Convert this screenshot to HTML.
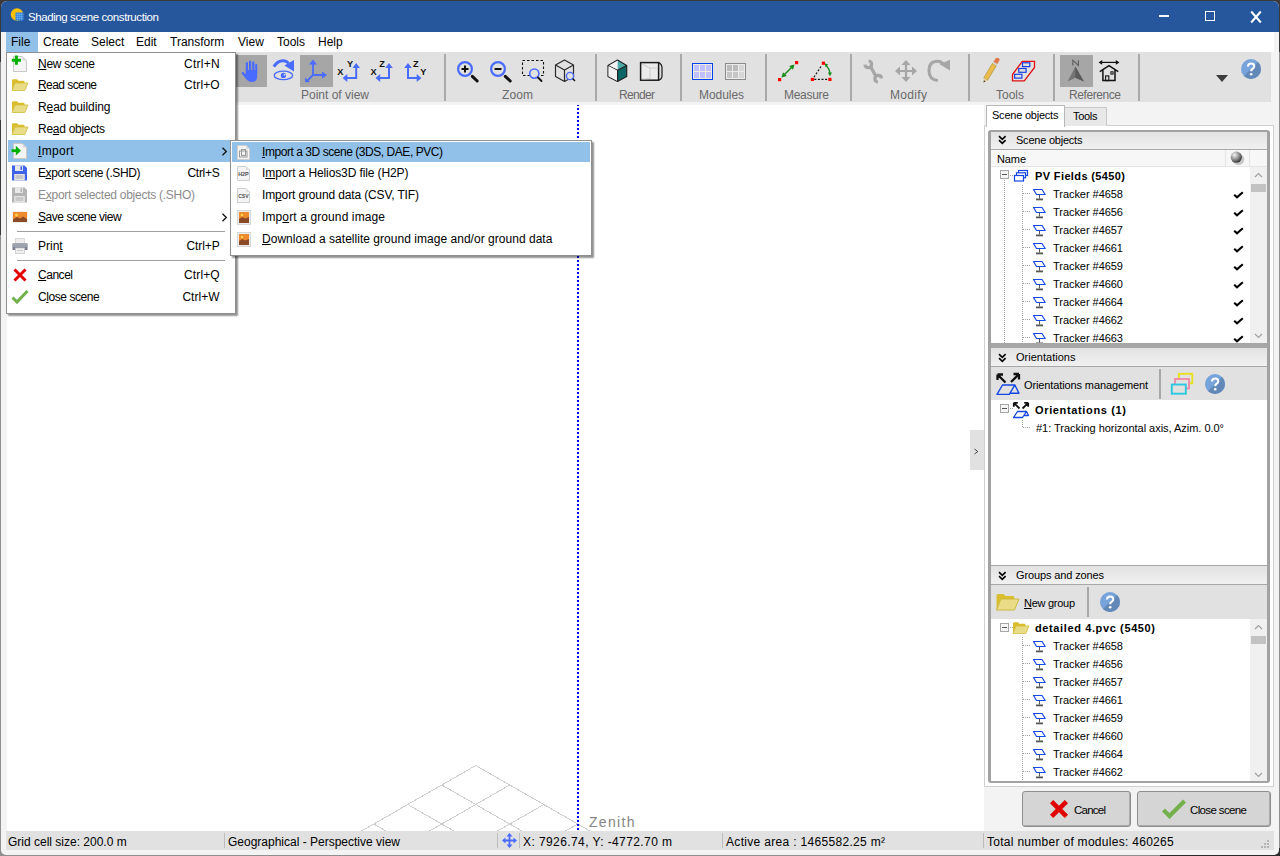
<!DOCTYPE html>
<html><head><meta charset="utf-8"><style>
html,body{margin:0;padding:0;width:1280px;height:856px;overflow:hidden;background:#3a3a3a;}
body{position:relative;font-family:'Liberation Sans', sans-serif;}
body>div,body>svg{position:absolute;box-sizing:border-box;}
.t{white-space:pre;line-height:1;}
u{text-decoration:underline;text-underline-offset:1px;}
</style></head><body>
<div style="left:0px;top:0px;width:1280px;height:856px;background:#8F8F8F;"></div>
<div style="left:0px;top:0px;width:1280px;height:8px;background:#3A3A3A;"></div>
<div style="left:0px;top:0px;width:8px;height:62px;background:#3A3A3A;"></div>
<div style="left:1272px;top:0px;width:8px;height:52px;background:#3A3A3A;"></div>
<div style="left:1160px;top:848px;width:120px;height:8px;background:#2A2A2A;"></div>
<div style="left:0px;top:120px;width:8px;height:115px;background:#3A3A3A;"></div>
<div style="left:1px;top:1px;width:1278px;height:854px;background:#F3F3F3;border-radius:6px 6px 5px 5px;"></div>
<div style="left:1px;top:1px;width:1278px;height:31px;background:#26569C;border-radius:6px 6px 0 0;"></div>
<div class="t" style="left:28px;top:12px;font-size:11.5px;color:#FFFFFF;letter-spacing:-0.412px;">Shading scene construction</div>
<svg style="left:10px;top:7px;" width="15" height="15" viewBox="0 0 15 15"><circle cx="7" cy="7.5" r="6.2" fill="#FFC000"/><path d="M7 7.5 L13.2 7.5 A6.2 6.2 0 0 1 7 13.7Z" fill="#F7A000"/><rect x="5.5" y="5.5" width="8" height="8" fill="#2F7FD8"/><path d="M7.5 5.5v8M9.5 5.5v8M11.5 5.5v8M5.5 7.5h8M5.5 9.5h8M5.5 11.5h8" stroke="#6FB0F0" stroke-width="0.6"/></svg>
<div style="left:1159px;top:15px;width:10px;height:2px;background:#fff;opacity:0.95;"></div>
<div style="left:1205px;top:11px;width:10px;height:10px;border:1px solid #fff;"></div>
<svg style="left:1249px;top:10px;" width="14" height="14" viewBox="0 0 14 14"><path d="M2.2 1.5L11.8 12.5M11.8 1.5L2.2 12.5" stroke="#fff" stroke-width="2"/></svg>
<div style="left:6px;top:32px;width:1268px;height:20px;background:#FFFFFF;"></div>
<div style="left:1px;top:32px;width:5px;height:20px;background:#F3F3F3;"></div>
<div style="left:6px;top:32px;width:32px;height:20px;background:#91C1E8;"></div>
<div class="t" style="left:11px;top:36px;font-size:12px;color:#000;">File</div>
<div class="t" style="left:43px;top:36px;font-size:12px;color:#000;">Create</div>
<div class="t" style="left:91px;top:36px;font-size:12px;color:#000;">Select</div>
<div class="t" style="left:136px;top:36px;font-size:12px;color:#000;">Edit</div>
<div class="t" style="left:170px;top:36px;font-size:12px;color:#000;">Transform</div>
<div class="t" style="left:238px;top:36px;font-size:12px;color:#000;">View</div>
<div class="t" style="left:277px;top:36px;font-size:12px;color:#000;">Tools</div>
<div class="t" style="left:318px;top:36px;font-size:12px;color:#000;">Help</div>
<div style="left:6px;top:52px;width:1265px;height:50px;background:#E1E1E1;"></div>
<div style="left:7px;top:105px;width:977px;height:726px;background:#FFFFFF;"></div>
<div style="left:444px;top:54px;width:2px;height:47px;background:#A9A9A9;"></div>
<div style="left:595px;top:54px;width:2px;height:47px;background:#A9A9A9;"></div>
<div style="left:680px;top:54px;width:2px;height:47px;background:#A9A9A9;"></div>
<div style="left:765px;top:54px;width:2px;height:47px;background:#A9A9A9;"></div>
<div style="left:850px;top:54px;width:2px;height:47px;background:#A9A9A9;"></div>
<div style="left:968px;top:54px;width:2px;height:47px;background:#A9A9A9;"></div>
<div style="left:1053px;top:54px;width:2px;height:47px;background:#A9A9A9;"></div>
<div style="left:1138px;top:54px;width:2px;height:47px;background:#A9A9A9;"></div>
<div class="t" style="left:301px;top:89px;font-size:12px;color:#6A6A6A;letter-spacing:-0.004px;">Point of view</div>
<div class="t" style="left:502px;top:89px;font-size:12px;color:#6A6A6A;letter-spacing:0.104px;">Zoom</div>
<div class="t" style="left:619px;top:89px;font-size:12px;color:#6A6A6A;letter-spacing:-0.672px;">Render</div>
<div class="t" style="left:699px;top:89px;font-size:12px;color:#6A6A6A;letter-spacing:-0.060px;">Modules</div>
<div class="t" style="left:784px;top:89px;font-size:12px;color:#6A6A6A;letter-spacing:-0.281px;">Measure</div>
<div class="t" style="left:890px;top:89px;font-size:12px;color:#6A6A6A;letter-spacing:0.331px;">Modify</div>
<div class="t" style="left:996px;top:89px;font-size:12px;color:#6A6A6A;letter-spacing:-0.004px;">Tools</div>
<div class="t" style="left:1069px;top:89px;font-size:12px;color:#6A6A6A;letter-spacing:-0.422px;">Reference</div>
<div style="left:236px;top:55px;width:31px;height:32px;background:#A6A6A6;"></div>
<svg style="left:240px;top:58px;" width="20" height="26" viewBox="0 0 20 26"><rect x="5.8" y="4" width="2.2" height="12" rx="1.1" fill="#4A6BFF"/><rect x="9" y="2.6" width="2.2" height="12" rx="1.1" fill="#4A6BFF"/><rect x="12.2" y="3.3" width="2.2" height="12" rx="1.1" fill="#4A6BFF"/><rect x="15.2" y="5.8" width="2" height="10" rx="1" fill="#4A6BFF"/><path d="M5.8 12 H17.2 V18.5 Q17.2 24 11.5 24 Q8.2 24 6.6 21.6 L1.8 15.6 Q1.3 14.4 2.5 14 Q3.5 13.8 4.3 14.8 L5.8 16.5Z" fill="#4A6BFF"/></svg>
<svg style="left:272px;top:58px;" width="24" height="24" viewBox="0 0 24 24"><path d="M1.8 8.6 Q6 2.5 11.5 2.8 Q14.5 3 16.5 5.2" stroke="#4A6BFF" stroke-width="3" fill="none"/><path d="M12.4 7.4 L22 2.1 L22 13.4 Z" fill="#4A6BFF"/><ellipse cx="11.4" cy="17.4" rx="9.2" ry="4.3" stroke="#4A6BFF" stroke-width="1.3" fill="none"/><circle cx="11.4" cy="17.4" r="2.6" fill="#4A6BFF"/><circle cx="12.6" cy="16.7" r="0.9" fill="#E1E1E1"/></svg>
<div style="left:300px;top:55px;width:33px;height:32px;background:#A6A6A6;"></div>
<svg style="left:304px;top:58px;" width="26" height="27" viewBox="0 0 26 27"><path d="M9 6 V17 H19 M9 17 L3 23" stroke="#4A6BFF" stroke-width="1.8" fill="none"/><path d="M5 6.5 L9 1.5 L13 6.5Z M18 13.5 L23 17 L18 20.5Z M1 19.5 L1.2 24.2 L6 24 Z" fill="#4A6BFF"/></svg>
<svg style="left:336px;top:58px;" width="24" height="26" viewBox="0 0 24 26"><path d="M20.2 8 V20 H9" stroke="#4A6BFF" stroke-width="2" fill="none"/><path d="M16.5 10 L20.2 5 L24 10Z M11.3 16 L6.6 20 L11.3 24Z" fill="#4A6BFF"/><text x="1.3" y="16.6" font-family="Liberation Sans" font-weight="bold" font-size="9.2" fill="#111">X</text><text x="11" y="8.9" font-family="Liberation Sans" font-weight="bold" font-size="9.2" fill="#111">Y</text></svg>
<svg style="left:369px;top:58px;" width="24" height="26" viewBox="0 0 24 26"><path d="M20 8 V20 H9" stroke="#4A6BFF" stroke-width="2" fill="none"/><path d="M16.3 10 L20 5 L23.8 10Z M11.2 16 L6.5 20 L11.2 24Z" fill="#4A6BFF"/><text x="1.5" y="16.6" font-family="Liberation Sans" font-weight="bold" font-size="9.2" fill="#111">X</text><text x="10.2" y="8.9" font-family="Liberation Sans" font-weight="bold" font-size="9.2" fill="#111">Z</text></svg>
<svg style="left:403px;top:58px;" width="26" height="26" viewBox="0 0 26 26"><path d="M5 8 V20 H14" stroke="#4A6BFF" stroke-width="2" fill="none"/><path d="M1.2 10 L5 5 L8.8 10Z M13.7 16 L18.4 20 L13.7 24Z" fill="#4A6BFF"/><text x="10" y="8.9" font-family="Liberation Sans" font-weight="bold" font-size="9.2" fill="#111">Z</text><text x="17.2" y="17.4" font-family="Liberation Sans" font-weight="bold" font-size="9.2" fill="#111">Y</text></svg>
<svg style="left:455px;top:58px;" width="26" height="26" viewBox="0 0 26 26"><circle cx="10" cy="11" r="6.9" stroke="#4A6BFF" stroke-width="2.2" fill="none"/><path d="M6.5 11 H13.5 M10 7.5 V14.5" stroke="#111" stroke-width="2"/><path d="M17.3 18.3 L22.2 23" stroke="#111" stroke-width="3" stroke-linecap="round"/></svg>
<svg style="left:488px;top:58px;" width="26" height="26" viewBox="0 0 26 26"><circle cx="10" cy="11" r="6.9" stroke="#4A6BFF" stroke-width="2.2" fill="none"/><path d="M6.5 11 H13.5" stroke="#111" stroke-width="2"/><path d="M17.3 18.3 L22.2 23" stroke="#111" stroke-width="3" stroke-linecap="round"/></svg>
<svg style="left:520px;top:58px;" width="28" height="26" viewBox="0 0 28 26"><rect x="2.5" y="2.5" width="21" height="15" stroke="#111" stroke-width="1.1" stroke-dasharray="2.5 2" fill="none"/><circle cx="14.3" cy="15.6" r="4.6" stroke="#4A6BFF" stroke-width="1.6" fill="#E1E1E1"/><path d="M18 19.5 L21.5 23" stroke="#111" stroke-width="1.8" stroke-linecap="round"/></svg>
<svg style="left:554px;top:58px;" width="24" height="26" viewBox="0 0 24 26"><path d="M1.5 7 L10.5 2 L19.5 7 V18.5 L10.5 23.5 L1.5 18.5Z M1.5 7 L10.5 12 L19.5 7 M10.5 12 V23.5" stroke="#2a2a2a" stroke-width="1.2" fill="none" stroke-linejoin="round"/><circle cx="16" cy="18" r="3.6" stroke="#4A6BFF" stroke-width="1.4" fill="#E1E1E1"/><path d="M18.6 20.6 L21 23" stroke="#111" stroke-width="1.4"/></svg>
<svg style="left:606px;top:58px;" width="24" height="26" viewBox="0 0 24 26"><path d="M11.5 12.3 L20.7 7.5 V18.5 L11.5 23.5Z" fill="#0B6766"/><path d="M11.5 2 L20.7 7.5 L11.5 12.3Z" fill="#4FAAAA"/><path d="M2 7.5 L11.5 2 L20.7 7.5 V18.5 L11.5 23.5 L2 18.5Z M2 7.5 L11.5 12.3 L20.7 7.5 M11.5 12.3 V23.5" stroke="#222" stroke-width="1.2" fill="none" stroke-linejoin="round"/><path d="M2.6 8 L11 12.6 V22.8 L2.6 18.2Z" fill="#F2F2F2"/><path d="M11.5 2.7 V11.5 L3.3 7.5Z" fill="#F2F2F2"/></svg>
<svg style="left:638px;top:58px;" width="26" height="26" viewBox="0 0 26 26"><rect x="2.6" y="4.6" width="18" height="17.6" fill="#EBEBEB" stroke="#1a1a1a" stroke-width="1.5"/><path d="M20.6 4.6 Q24 6 24 10 V18 Q24 21 20.6 22.2" stroke="#1a1a1a" stroke-width="1.2" fill="none"/><path d="M4 6 L12 10 V21 M12 10 H20 M4 21 L12 20.5" stroke="#C9C9C9" stroke-width="0.9" fill="none"/></svg>
<svg style="left:690px;top:60px;" width="26" height="22" viewBox="0 0 26 22"><rect x="2" y="3" width="21" height="17" fill="#0044F0"/><rect x="3" y="4" width="19" height="15" fill="#EFEAE4"/><rect x="4" y="5" width="5" height="6" fill="#C0C0FF" shape-rendering="crispEdges"/><rect x="10" y="5" width="5" height="6" fill="#C0C0FF" shape-rendering="crispEdges"/><rect x="16" y="5" width="5" height="6" fill="#C0C0FF" shape-rendering="crispEdges"/><rect x="4" y="12" width="5" height="6" fill="#C0C0FF" shape-rendering="crispEdges"/><rect x="10" y="12" width="5" height="6" fill="#C0C0FF" shape-rendering="crispEdges"/><rect x="16" y="12" width="5" height="6" fill="#C0C0FF" shape-rendering="crispEdges"/></svg>
<svg style="left:723px;top:60px;" width="26" height="22" viewBox="0 0 26 22"><rect x="2" y="3" width="21" height="17" fill="#8A8A8A"/><rect x="3" y="4" width="19" height="15" fill="#EBEBEB"/><rect x="4" y="5" width="5" height="6" fill="#BBBBBB" shape-rendering="crispEdges"/><rect x="10" y="5" width="5" height="6" fill="#BBBBBB" shape-rendering="crispEdges"/><rect x="16" y="5" width="5" height="6" fill="#D6D6D6" shape-rendering="crispEdges"/><rect x="4" y="12" width="5" height="6" fill="#C6C6C6" shape-rendering="crispEdges"/><rect x="10" y="12" width="5" height="6" fill="#C6C6C6" shape-rendering="crispEdges"/><rect x="16" y="12" width="5" height="6" fill="#D6D6D6" shape-rendering="crispEdges"/></svg>
<svg style="left:776px;top:58px;" width="24" height="26" viewBox="0 0 24 26"><rect x="2" y="20" width="3.2" height="3.2" fill="#FF0000"/><rect x="19" y="3" width="3.2" height="3.2" fill="#FF0000"/><path d="M7.5 17.5 L16.5 8.5" stroke="#178A17" stroke-width="1.5"/><path d="M5.5 19.5 L7 14.3 L10.8 18 Z M18.5 6.5 L13.2 8 L17 11.8 Z" fill="#178A17"/></svg>
<svg style="left:809px;top:58px;" width="24" height="26" viewBox="0 0 24 26"><rect x="1.8" y="19.8" width="3.2" height="3.2" fill="#FF0000"/><rect x="12.8" y="3.6" width="3.2" height="3.2" fill="#FF0000"/><rect x="19.3" y="19.8" width="3.2" height="3.2" fill="#FF0000"/><path d="M5 19.2 L12.8 7.2 M5.3 21.4 H19.3" stroke="#111" stroke-width="1.2" stroke-dasharray="2 1.6"/><path d="M16.5 7 Q20.5 10.5 21 15.5" stroke="#178A17" stroke-width="1.3" fill="none"/><path d="M15.8 5.3 L19.2 6.6 L16.6 9.2Z M18.9 14.6 L23 14.6 L21 18.2Z" fill="#178A17"/></svg>
<svg style="left:862px;top:57px;" width="22" height="28" viewBox="0 0 22 28"><path d="M6.59 4.01 A3.3 3.3 0 1 1 3.01 7.59 M15.91 24.99 A3.3 3.3 0 1 1 19.49 21.41" stroke="#A6A6A6" stroke-width="3.2" fill="none"/><path d="M8.4 9.4 L14.2 19.6" stroke="#A6A6A6" stroke-width="3.2"/></svg>
<svg style="left:893px;top:58px;" width="26" height="26" viewBox="0 0 26 26"><path d="M13 2 L17.5 7 H8.5Z M13 24 L17.5 19 H8.5Z M2 13 L7 8.5 V17.5Z M24 13 L19 8.5 V17.5Z" fill="#A6A6A6"/><path d="M13 6 V20 M6 13 H20" stroke="#A6A6A6" stroke-width="2.2"/></svg>
<svg style="left:926px;top:58px;" width="26" height="26" viewBox="0 0 26 26"><path d="M17.8 6.3 Q15 3.3 11.5 3.3 Q3 3.3 3 12.8 Q3 21.5 11.8 22.6" stroke="#A6A6A6" stroke-width="3" fill="none"/><path d="M13.6 6.2 L24 1.8 L24 12.5Z" fill="#A6A6A6"/></svg>
<svg style="left:981px;top:56px;" width="20" height="30" viewBox="0 0 20 30"><path d="M2.76 21.94 L11.5 7.37 L15.3 9.63 L6.56 24.2Z" fill="#E9BC4C" stroke="#B89032" stroke-width="0.7"/><path d="M11.5 7.37 L12.5 5.66 L16.3 7.92 L15.3 9.63Z" fill="#CFCFCF"/><path d="M12.5 5.66 L14.6 2.23 Q16.5 1.2 18.2 2.5 Q18.9 3.6 18.4 4.49 L16.3 7.92Z" fill="#E27A4A"/><path d="M2.6 26.5 L2.76 21.94 L6.56 24.2Z" fill="#E8D0A0"/><path d="M2.6 26.5 L2.9 24.3 L4.6 25.3Z" fill="#3A2A20"/></svg>
<svg style="left:1011px;top:58px;" width="26" height="26" viewBox="0 0 26 26"><path d="M1.5 22.8 V16.5 L11.3 3.3 H23.5 V9.5 L13.3 22.8 Z" fill="none" stroke="#E01010" stroke-width="1.3"/><rect x="11.5" y="4.8" width="7.3" height="3.8" fill="none" stroke="#1A3FE0" stroke-width="1.2"/><rect x="7.8" y="10.5" width="7.3" height="3.8" fill="none" stroke="#1A3FE0" stroke-width="1.2"/><rect x="3.6" y="16.3" width="7.3" height="3.8" fill="none" stroke="#1A3FE0" stroke-width="1.2"/></svg>
<div style="left:1060px;top:55px;width:33px;height:32px;background:#A6A6A6;"></div>
<svg style="left:1064px;top:58px;" width="26" height="26" viewBox="0 0 26 26"><path d="M8.8 7.5 V2.2 L14.4 7.5 V2.2" stroke="#5E5E5E" stroke-width="1.1" fill="none"/><path d="M11.4 8.6 L19.9 23.5 L11.4 19.8 L3.6 23.5Z" fill="#747474"/><path d="M11.4 8.6 L19.9 23.5 L11.4 19.8Z" fill="#5A5A5A"/></svg>
<svg style="left:1096px;top:58px;" width="26" height="26" viewBox="0 0 26 26"><path d="M4.5 4.4 H21.5" stroke="#111" stroke-width="1.2"/><path d="M2.6 4.4 L6.2 2 V6.8Z M23.4 4.4 L19.8 2 V6.8Z" fill="#111"/><path d="M3.8 13.6 L13 7.6 L22.2 13.6 M6.9 11.8 V22.6 H19 V11.8" stroke="#111" stroke-width="1.5" fill="none"/><rect x="9.6" y="17.9" width="3.2" height="4.7" fill="none" stroke="#111" stroke-width="1.1"/><rect x="14.9" y="13.8" width="2.2" height="2.3" fill="none" stroke="#111" stroke-width="1"/></svg>
<svg style="left:1215px;top:74px;" width="14" height="9" viewBox="0 0 14 9"><path d="M1 1 H13 L7 8Z" fill="#3C3C3C"/></svg>
<svg style="left:1241px;top:59px;" width="20" height="20" viewBox="0 0 20 20"><defs><clipPath id="hc124159"><circle cx="10.0" cy="10.0" r="10.0"/></clipPath></defs><g clip-path="url(#hc124159)"><rect width="20" height="20" fill="#77A3DB"/><path d="M20 0 L20 20 L0 20Z" fill="#6288B8"/></g><path d="M7 7.5 Q7 4.5 10.2 4.5 Q13.3 4.5 13.3 7.3 Q13.3 9 11.4 10 Q10.2 10.7 10.2 12.2" stroke="#fff" stroke-width="2.1" fill="none"/><circle cx="10.2" cy="15.2" r="1.3" fill="#fff"/></svg>
<div style="left:984px;top:125px;width:290px;height:662px;background:#FFFFFF;border:1px solid #D0D0D0;"></div>
<div style="left:1064px;top:107px;width:43px;height:19px;background:#E8E8E8;border:1px solid #C8C8C8;border-bottom:none;"></div>
<div class="t" style="left:1073px;top:111px;font-size:11px;color:#000;letter-spacing:-0.322px;">Tools</div>
<div style="left:986px;top:105px;width:79px;height:22px;background:#FFFFFF;border:1px solid #B8B8B8;border-bottom:none;"></div>
<div style="left:984px;top:125px;width:3px;height:1px;background:#D0D0D0;"></div>
<div class="t" style="left:992px;top:110px;font-size:11px;color:#000;letter-spacing:-0.226px;">Scene objects</div>
<div style="left:988px;top:130px;width:282px;height:653px;border:solid #A2A2A2;border-width:2px 3px 2px 3px;border-radius:3px;background:#FFFFFF;"></div>
<div style="left:991px;top:132px;width:276px;height:17px;background:linear-gradient(#E2E2E2,#F1F1F1);"></div>
<div style="left:991px;top:149px;width:276px;height:1px;background:#A8A8A8;"></div>
<svg style="left:998px;top:135px;" width="9" height="10" viewBox="0 0 9 10"><path d="M1 1.2 L4.3 4.3 L7.6 1.2 M1 5.2 L4.3 8.3 L7.6 5.2" stroke="#000" stroke-width="1.6" fill="none"/></svg>
<div class="t" style="left:1016px;top:135px;font-size:11px;color:#000;letter-spacing:-0.226px;">Scene objects</div>
<div style="left:991px;top:150px;width:276px;height:16px;background:#F7F7F7;"></div>
<div style="left:991px;top:166px;width:276px;height:1px;background:#E4E4E4;"></div>
<div style="left:1225px;top:150px;width:1px;height:16px;background:#E4E4E4;"></div>
<div style="left:1249px;top:150px;width:1px;height:16px;background:#E4E4E4;"></div>
<div class="t" style="left:997px;top:154px;font-size:11px;color:#000;letter-spacing:-0.115px;">Name</div>
<svg style="left:1229px;top:150px;" width="18" height="17" viewBox="0 0 18 17"><defs><radialGradient id="sph" cx="0.35" cy="0.3" r="0.7"><stop offset="0" stop-color="#F4F4F4"/><stop offset="0.6" stop-color="#8A8A8A"/><stop offset="1" stop-color="#3A3A3A"/></radialGradient></defs><circle cx="9.5" cy="9.5" r="5.8" fill="#C8C8C8"/><circle cx="7.3" cy="7.2" r="5.6" fill="url(#sph)"/></svg>
<div style="left:1250px;top:167px;width:17px;height:176px;background:#F0F0F0;"></div>
<div style="left:1251px;top:184px;width:15px;height:8px;background:#C2C2C2;"></div>
<svg style="left:1254px;top:172px;" width="9" height="6" viewBox="0 0 9 6"><path d="M1 5 L4.5 1.5 L8 5" stroke="#A0A0A0" stroke-width="1.2" fill="none"/></svg>
<svg style="left:1254px;top:333px;" width="9" height="6" viewBox="0 0 9 6"><path d="M1 1 L4.5 4.5 L8 1" stroke="#A0A0A0" stroke-width="1.2" fill="none"/></svg>
<div style="left:1000px;top:170px;width:9px;height:9px;border:1px solid #A6A6A6;background:#F6F6F6;"></div>
<div style="left:1002px;top:174px;width:5px;height:1px;background:#555;"></div>
<div style="left:1010px;top:175px;width:3px;height:1px;background:repeating-linear-gradient(to right,#A0A0A0 0 1px,transparent 1px 2px);"></div>
<div style="left:1004px;top:180px;width:1px;height:163px;background:repeating-linear-gradient(to bottom,#A0A0A0 0 1px,transparent 1px 2px);"></div>
<svg style="left:1013px;top:169px;" width="16" height="14" viewBox="0 0 16 14"><rect x="5.5" y="1.5" width="9" height="5" fill="none" stroke="#1447E6" stroke-width="1.2"/><rect x="3.5" y="3.8" width="9" height="5" fill="#fff" stroke="#1447E6" stroke-width="1.2"/><rect x="1.5" y="6.5" width="9" height="5.5" fill="#fff" stroke="#1447E6" stroke-width="1.2"/></svg>
<div class="t" style="left:1035px;top:171px;font-size:11px;color:#000;font-weight:bold;letter-spacing:0.375px;">PV Fields (5450)</div>
<div style="left:1022px;top:185px;width:1px;height:158px;background:repeating-linear-gradient(to bottom,#A0A0A0 0 1px,transparent 1px 2px);"></div>
<div style="left:1023px;top:193px;width:8px;height:1px;background:repeating-linear-gradient(to right,#A0A0A0 0 1px,transparent 1px 2px);"></div>
<svg style="left:1032px;top:188px;" width="15" height="13" viewBox="0 0 15 13"><path d="M1.5 1.5 H10 L13.2 6.5 H4.5 Z" fill="none" stroke="#1447E6" stroke-width="1.2" stroke-linejoin="round"/><path d="M7.5 7 V10.5" stroke="#555" stroke-width="1"/><rect x="4" y="10.5" width="7" height="1.8" fill="#555"/></svg>
<div class="t" style="left:1053px;top:189px;font-size:11px;color:#000;letter-spacing:-0.044px;">Tracker #4658</div>
<svg style="left:1233px;top:191px;" width="11" height="8" viewBox="0 0 11 8"><path d="M1.2 3.8 L4 6.3 L9.8 1.3" stroke="#000" stroke-width="2.1" fill="none"/></svg>
<div style="left:1023px;top:211px;width:8px;height:1px;background:repeating-linear-gradient(to right,#A0A0A0 0 1px,transparent 1px 2px);"></div>
<svg style="left:1032px;top:206px;" width="15" height="13" viewBox="0 0 15 13"><path d="M1.5 1.5 H10 L13.2 6.5 H4.5 Z" fill="none" stroke="#1447E6" stroke-width="1.2" stroke-linejoin="round"/><path d="M7.5 7 V10.5" stroke="#555" stroke-width="1"/><rect x="4" y="10.5" width="7" height="1.8" fill="#555"/></svg>
<div class="t" style="left:1053px;top:207px;font-size:11px;color:#000;letter-spacing:-0.044px;">Tracker #4656</div>
<svg style="left:1233px;top:209px;" width="11" height="8" viewBox="0 0 11 8"><path d="M1.2 3.8 L4 6.3 L9.8 1.3" stroke="#000" stroke-width="2.1" fill="none"/></svg>
<div style="left:1023px;top:229px;width:8px;height:1px;background:repeating-linear-gradient(to right,#A0A0A0 0 1px,transparent 1px 2px);"></div>
<svg style="left:1032px;top:224px;" width="15" height="13" viewBox="0 0 15 13"><path d="M1.5 1.5 H10 L13.2 6.5 H4.5 Z" fill="none" stroke="#1447E6" stroke-width="1.2" stroke-linejoin="round"/><path d="M7.5 7 V10.5" stroke="#555" stroke-width="1"/><rect x="4" y="10.5" width="7" height="1.8" fill="#555"/></svg>
<div class="t" style="left:1053px;top:225px;font-size:11px;color:#000;letter-spacing:-0.044px;">Tracker #4657</div>
<svg style="left:1233px;top:227px;" width="11" height="8" viewBox="0 0 11 8"><path d="M1.2 3.8 L4 6.3 L9.8 1.3" stroke="#000" stroke-width="2.1" fill="none"/></svg>
<div style="left:1023px;top:247px;width:8px;height:1px;background:repeating-linear-gradient(to right,#A0A0A0 0 1px,transparent 1px 2px);"></div>
<svg style="left:1032px;top:242px;" width="15" height="13" viewBox="0 0 15 13"><path d="M1.5 1.5 H10 L13.2 6.5 H4.5 Z" fill="none" stroke="#1447E6" stroke-width="1.2" stroke-linejoin="round"/><path d="M7.5 7 V10.5" stroke="#555" stroke-width="1"/><rect x="4" y="10.5" width="7" height="1.8" fill="#555"/></svg>
<div class="t" style="left:1053px;top:243px;font-size:11px;color:#000;letter-spacing:-0.044px;">Tracker #4661</div>
<svg style="left:1233px;top:245px;" width="11" height="8" viewBox="0 0 11 8"><path d="M1.2 3.8 L4 6.3 L9.8 1.3" stroke="#000" stroke-width="2.1" fill="none"/></svg>
<div style="left:1023px;top:265px;width:8px;height:1px;background:repeating-linear-gradient(to right,#A0A0A0 0 1px,transparent 1px 2px);"></div>
<svg style="left:1032px;top:260px;" width="15" height="13" viewBox="0 0 15 13"><path d="M1.5 1.5 H10 L13.2 6.5 H4.5 Z" fill="none" stroke="#1447E6" stroke-width="1.2" stroke-linejoin="round"/><path d="M7.5 7 V10.5" stroke="#555" stroke-width="1"/><rect x="4" y="10.5" width="7" height="1.8" fill="#555"/></svg>
<div class="t" style="left:1053px;top:261px;font-size:11px;color:#000;letter-spacing:-0.044px;">Tracker #4659</div>
<svg style="left:1233px;top:263px;" width="11" height="8" viewBox="0 0 11 8"><path d="M1.2 3.8 L4 6.3 L9.8 1.3" stroke="#000" stroke-width="2.1" fill="none"/></svg>
<div style="left:1023px;top:283px;width:8px;height:1px;background:repeating-linear-gradient(to right,#A0A0A0 0 1px,transparent 1px 2px);"></div>
<svg style="left:1032px;top:278px;" width="15" height="13" viewBox="0 0 15 13"><path d="M1.5 1.5 H10 L13.2 6.5 H4.5 Z" fill="none" stroke="#1447E6" stroke-width="1.2" stroke-linejoin="round"/><path d="M7.5 7 V10.5" stroke="#555" stroke-width="1"/><rect x="4" y="10.5" width="7" height="1.8" fill="#555"/></svg>
<div class="t" style="left:1053px;top:279px;font-size:11px;color:#000;letter-spacing:-0.044px;">Tracker #4660</div>
<svg style="left:1233px;top:281px;" width="11" height="8" viewBox="0 0 11 8"><path d="M1.2 3.8 L4 6.3 L9.8 1.3" stroke="#000" stroke-width="2.1" fill="none"/></svg>
<div style="left:1023px;top:301px;width:8px;height:1px;background:repeating-linear-gradient(to right,#A0A0A0 0 1px,transparent 1px 2px);"></div>
<svg style="left:1032px;top:296px;" width="15" height="13" viewBox="0 0 15 13"><path d="M1.5 1.5 H10 L13.2 6.5 H4.5 Z" fill="none" stroke="#1447E6" stroke-width="1.2" stroke-linejoin="round"/><path d="M7.5 7 V10.5" stroke="#555" stroke-width="1"/><rect x="4" y="10.5" width="7" height="1.8" fill="#555"/></svg>
<div class="t" style="left:1053px;top:297px;font-size:11px;color:#000;letter-spacing:-0.044px;">Tracker #4664</div>
<svg style="left:1233px;top:299px;" width="11" height="8" viewBox="0 0 11 8"><path d="M1.2 3.8 L4 6.3 L9.8 1.3" stroke="#000" stroke-width="2.1" fill="none"/></svg>
<div style="left:1023px;top:319px;width:8px;height:1px;background:repeating-linear-gradient(to right,#A0A0A0 0 1px,transparent 1px 2px);"></div>
<svg style="left:1032px;top:314px;" width="15" height="13" viewBox="0 0 15 13"><path d="M1.5 1.5 H10 L13.2 6.5 H4.5 Z" fill="none" stroke="#1447E6" stroke-width="1.2" stroke-linejoin="round"/><path d="M7.5 7 V10.5" stroke="#555" stroke-width="1"/><rect x="4" y="10.5" width="7" height="1.8" fill="#555"/></svg>
<div class="t" style="left:1053px;top:315px;font-size:11px;color:#000;letter-spacing:-0.044px;">Tracker #4662</div>
<svg style="left:1233px;top:317px;" width="11" height="8" viewBox="0 0 11 8"><path d="M1.2 3.8 L4 6.3 L9.8 1.3" stroke="#000" stroke-width="2.1" fill="none"/></svg>
<div style="left:1023px;top:337px;width:8px;height:1px;background:repeating-linear-gradient(to right,#A0A0A0 0 1px,transparent 1px 2px);"></div>
<svg style="left:1032px;top:332px;" width="15" height="13" viewBox="0 0 15 13"><path d="M1.5 1.5 H10 L13.2 6.5 H4.5 Z" fill="none" stroke="#1447E6" stroke-width="1.2" stroke-linejoin="round"/><path d="M7.5 7 V10.5" stroke="#555" stroke-width="1"/><rect x="4" y="10.5" width="7" height="1.8" fill="#555"/></svg>
<div class="t" style="left:1053px;top:333px;font-size:11px;color:#000;letter-spacing:-0.044px;">Tracker #4663</div>
<svg style="left:1233px;top:335px;" width="11" height="8" viewBox="0 0 11 8"><path d="M1.2 3.8 L4 6.3 L9.8 1.3" stroke="#000" stroke-width="2.1" fill="none"/></svg>
<div style="left:991px;top:343px;width:276px;height:5px;background:#A6A6A6;"></div>
<div style="left:991px;top:348px;width:276px;height:18px;background:linear-gradient(#E2E2E2,#F1F1F1);"></div>
<div style="left:991px;top:366px;width:276px;height:1px;background:#A8A8A8;"></div>
<svg style="left:998px;top:353px;" width="9" height="10" viewBox="0 0 9 10"><path d="M1 1.2 L4.3 4.3 L7.6 1.2 M1 5.2 L4.3 8.3 L7.6 5.2" stroke="#000" stroke-width="1.6" fill="none"/></svg>
<div class="t" style="left:1016px;top:352px;font-size:11px;color:#000;letter-spacing:0.017px;">Orientations</div>
<div style="left:991px;top:367px;width:276px;height:33px;background:#E1E1E1;"></div>
<svg style="left:995px;top:371px;" width="27" height="26" viewBox="0 0 27 26"><path d="M3 4 L10.5 11.5 M2.5 3.5 H8 M2.5 3.5 V9 M23.5 3.5 L16 11 M24 3 H18.5 M24 3 V8.5" stroke="#111" stroke-width="2.3" fill="none"/><path d="M2 23.4 L7.5 14 H19.8 L14.3 23.4 Z M19.8 14 L24 22.2 H14.8" stroke="#1447E6" stroke-width="1.4" fill="none" stroke-linejoin="round"/></svg>
<div class="t" style="left:1024px;top:380px;font-size:11px;color:#000;letter-spacing:-0.117px;">Orientations management</div>
<div style="left:1159px;top:369px;width:2px;height:30px;background:#A8A8A8;"></div>
<svg style="left:1169px;top:371px;" width="26" height="26" viewBox="0 0 26 26"><rect x="9.8" y="2.8" width="13.5" height="9.5" fill="#E1E1E1" stroke="#E8E020" stroke-width="1.9"/><rect x="6" y="8" width="14" height="9.5" fill="#E1E1E1" stroke="#F08CA8" stroke-width="1.9"/><rect x="2.8" y="13.5" width="14" height="9.2" fill="#E1E1E1" stroke="#2AC8E0" stroke-width="1.9"/></svg>
<svg style="left:1205px;top:374px;" width="20" height="20" viewBox="0 0 20 20"><defs><clipPath id="hc1205374"><circle cx="10.0" cy="10.0" r="10.0"/></clipPath></defs><g clip-path="url(#hc1205374)"><rect width="20" height="20" fill="#77A3DB"/><path d="M20 0 L20 20 L0 20Z" fill="#6288B8"/></g><path d="M7 7.5 Q7 4.5 10.2 4.5 Q13.3 4.5 13.3 7.3 Q13.3 9 11.4 10 Q10.2 10.7 10.2 12.2" stroke="#fff" stroke-width="2.1" fill="none"/><circle cx="10.2" cy="15.2" r="1.3" fill="#fff"/></svg>
<div style="left:1000px;top:404px;width:9px;height:9px;border:1px solid #A6A6A6;background:#F6F6F6;"></div>
<div style="left:1002px;top:408px;width:5px;height:1px;background:#555;"></div>
<div style="left:1010px;top:408px;width:3px;height:1px;background:repeating-linear-gradient(to right,#A0A0A0 0 1px,transparent 1px 2px);"></div>
<svg style="left:1012px;top:401px;" width="18" height="18" viewBox="0 0 18 18"><path d="M2.3 2.3 L7.5 7.5 M1.8 1.8 H5.8 M1.8 1.8 V5.8 M15.7 2.3 L10.5 7.5 M16.2 1.8 H12.2 M16.2 1.8 V5.8" stroke="#111" stroke-width="1.8" fill="none"/><path d="M1.5 16.5 L5.5 10.5 H14.5 L10.5 16.5 Z M14.5 10.5 L16.5 14.5 H11.5" stroke="#1447E6" stroke-width="1.3" fill="none" stroke-linejoin="round"/></svg>
<div class="t" style="left:1035px;top:405px;font-size:11px;color:#000;font-weight:bold;letter-spacing:0.647px;">Orientations (1)</div>
<div style="left:1022px;top:420px;width:1px;height:8px;background:repeating-linear-gradient(to bottom,#A0A0A0 0 1px,transparent 1px 2px);"></div>
<div style="left:1023px;top:427px;width:8px;height:1px;background:repeating-linear-gradient(to right,#A0A0A0 0 1px,transparent 1px 2px);"></div>
<div class="t" style="left:1036px;top:423px;font-size:11px;color:#000;letter-spacing:-0.027px;">#1: Tracking horizontal axis, Azim. 0.0°</div>
<div style="left:991px;top:565px;width:276px;height:1px;background:#A8A8A8;"></div>
<div style="left:991px;top:566px;width:276px;height:18px;background:linear-gradient(#E2E2E2,#F1F1F1);"></div>
<div style="left:991px;top:584px;width:276px;height:1px;background:#A8A8A8;"></div>
<svg style="left:998px;top:571px;" width="9" height="10" viewBox="0 0 9 10"><path d="M1 1.2 L4.3 4.3 L7.6 1.2 M1 5.2 L4.3 8.3 L7.6 5.2" stroke="#000" stroke-width="1.6" fill="none"/></svg>
<div class="t" style="left:1016px;top:570px;font-size:11px;color:#000;letter-spacing:-0.126px;">Groups and zones</div>
<div style="left:991px;top:585px;width:276px;height:34px;background:#E1E1E1;"></div>
<svg style="left:995px;top:592px;" width="26" height="20" viewBox="0 0 26 20"><path d="M1.5 3.5 Q1.5 2 3 2 H8.5 L10.5 4 H18 Q19.2 4 19.2 5.2 V7 H6 L1.5 18Z" fill="#D9BF2E"/><path d="M1.5 18 L6 7 H24 L19.5 18Z" fill="#E8DC86" stroke="#CDB635" stroke-width="0.9"/></svg>
<div class="t" style="left:1024px;top:598px;font-size:11px;color:#000;letter-spacing:-0.275px;"><u>N</u>ew group</div>
<div style="left:1087px;top:587px;width:2px;height:30px;background:#A8A8A8;"></div>
<svg style="left:1100px;top:592px;" width="20" height="20" viewBox="0 0 20 20"><defs><clipPath id="hc1100592"><circle cx="10.0" cy="10.0" r="10.0"/></clipPath></defs><g clip-path="url(#hc1100592)"><rect width="20" height="20" fill="#77A3DB"/><path d="M20 0 L20 20 L0 20Z" fill="#6288B8"/></g><path d="M7 7.5 Q7 4.5 10.2 4.5 Q13.3 4.5 13.3 7.3 Q13.3 9 11.4 10 Q10.2 10.7 10.2 12.2" stroke="#fff" stroke-width="2.1" fill="none"/><circle cx="10.2" cy="15.2" r="1.3" fill="#fff"/></svg>
<div style="left:1250px;top:619px;width:17px;height:162px;background:#F0F0F0;"></div>
<div style="left:1251px;top:636px;width:15px;height:8px;background:#C2C2C2;"></div>
<svg style="left:1254px;top:624px;" width="9" height="6" viewBox="0 0 9 6"><path d="M1 5 L4.5 1.5 L8 5" stroke="#A0A0A0" stroke-width="1.2" fill="none"/></svg>
<svg style="left:1254px;top:772px;" width="9" height="6" viewBox="0 0 9 6"><path d="M1 1 L4.5 4.5 L8 1" stroke="#A0A0A0" stroke-width="1.2" fill="none"/></svg>
<div style="left:1000px;top:623px;width:9px;height:9px;border:1px solid #A6A6A6;background:#F6F6F6;"></div>
<div style="left:1002px;top:627px;width:5px;height:1px;background:#555;"></div>
<div style="left:1010px;top:627px;width:3px;height:1px;background:repeating-linear-gradient(to right,#A0A0A0 0 1px,transparent 1px 2px);"></div>
<svg style="left:1012px;top:620px;" width="18" height="15" viewBox="0 0 18 15"><path d="M1 3.5 Q1 2.2 2.3 2.2 H6 L7.5 3.7 H12.5 Q13.5 3.7 13.5 4.8 V6 H4.2 L1 13.5Z" fill="#D9BF2E"/><path d="M1 13.5 L4.2 6 H17 L13.8 13.5Z" fill="#E8DC86" stroke="#D2BC36" stroke-width="0.8"/></svg>
<div class="t" style="left:1035px;top:623px;font-size:11px;color:#000;font-weight:bold;letter-spacing:0.620px;">detailed 4.pvc (5450)</div>
<div style="left:1022px;top:637px;width:1px;height:144px;background:repeating-linear-gradient(to bottom,#A0A0A0 0 1px,transparent 1px 2px);"></div>
<div style="left:1023px;top:645px;width:8px;height:1px;background:repeating-linear-gradient(to right,#A0A0A0 0 1px,transparent 1px 2px);"></div>
<svg style="left:1032px;top:640px;" width="15" height="13" viewBox="0 0 15 13"><path d="M1.5 1.5 H10 L13.2 6.5 H4.5 Z" fill="none" stroke="#1447E6" stroke-width="1.2" stroke-linejoin="round"/><path d="M7.5 7 V10.5" stroke="#555" stroke-width="1"/><rect x="4" y="10.5" width="7" height="1.8" fill="#555"/></svg>
<div class="t" style="left:1053px;top:641px;font-size:11px;color:#000;letter-spacing:-0.044px;">Tracker #4658</div>
<div style="left:1023px;top:663px;width:8px;height:1px;background:repeating-linear-gradient(to right,#A0A0A0 0 1px,transparent 1px 2px);"></div>
<svg style="left:1032px;top:658px;" width="15" height="13" viewBox="0 0 15 13"><path d="M1.5 1.5 H10 L13.2 6.5 H4.5 Z" fill="none" stroke="#1447E6" stroke-width="1.2" stroke-linejoin="round"/><path d="M7.5 7 V10.5" stroke="#555" stroke-width="1"/><rect x="4" y="10.5" width="7" height="1.8" fill="#555"/></svg>
<div class="t" style="left:1053px;top:659px;font-size:11px;color:#000;letter-spacing:-0.044px;">Tracker #4656</div>
<div style="left:1023px;top:681px;width:8px;height:1px;background:repeating-linear-gradient(to right,#A0A0A0 0 1px,transparent 1px 2px);"></div>
<svg style="left:1032px;top:676px;" width="15" height="13" viewBox="0 0 15 13"><path d="M1.5 1.5 H10 L13.2 6.5 H4.5 Z" fill="none" stroke="#1447E6" stroke-width="1.2" stroke-linejoin="round"/><path d="M7.5 7 V10.5" stroke="#555" stroke-width="1"/><rect x="4" y="10.5" width="7" height="1.8" fill="#555"/></svg>
<div class="t" style="left:1053px;top:677px;font-size:11px;color:#000;letter-spacing:-0.044px;">Tracker #4657</div>
<div style="left:1023px;top:699px;width:8px;height:1px;background:repeating-linear-gradient(to right,#A0A0A0 0 1px,transparent 1px 2px);"></div>
<svg style="left:1032px;top:694px;" width="15" height="13" viewBox="0 0 15 13"><path d="M1.5 1.5 H10 L13.2 6.5 H4.5 Z" fill="none" stroke="#1447E6" stroke-width="1.2" stroke-linejoin="round"/><path d="M7.5 7 V10.5" stroke="#555" stroke-width="1"/><rect x="4" y="10.5" width="7" height="1.8" fill="#555"/></svg>
<div class="t" style="left:1053px;top:695px;font-size:11px;color:#000;letter-spacing:-0.044px;">Tracker #4661</div>
<div style="left:1023px;top:717px;width:8px;height:1px;background:repeating-linear-gradient(to right,#A0A0A0 0 1px,transparent 1px 2px);"></div>
<svg style="left:1032px;top:712px;" width="15" height="13" viewBox="0 0 15 13"><path d="M1.5 1.5 H10 L13.2 6.5 H4.5 Z" fill="none" stroke="#1447E6" stroke-width="1.2" stroke-linejoin="round"/><path d="M7.5 7 V10.5" stroke="#555" stroke-width="1"/><rect x="4" y="10.5" width="7" height="1.8" fill="#555"/></svg>
<div class="t" style="left:1053px;top:713px;font-size:11px;color:#000;letter-spacing:-0.044px;">Tracker #4659</div>
<div style="left:1023px;top:735px;width:8px;height:1px;background:repeating-linear-gradient(to right,#A0A0A0 0 1px,transparent 1px 2px);"></div>
<svg style="left:1032px;top:730px;" width="15" height="13" viewBox="0 0 15 13"><path d="M1.5 1.5 H10 L13.2 6.5 H4.5 Z" fill="none" stroke="#1447E6" stroke-width="1.2" stroke-linejoin="round"/><path d="M7.5 7 V10.5" stroke="#555" stroke-width="1"/><rect x="4" y="10.5" width="7" height="1.8" fill="#555"/></svg>
<div class="t" style="left:1053px;top:731px;font-size:11px;color:#000;letter-spacing:-0.044px;">Tracker #4660</div>
<div style="left:1023px;top:753px;width:8px;height:1px;background:repeating-linear-gradient(to right,#A0A0A0 0 1px,transparent 1px 2px);"></div>
<svg style="left:1032px;top:748px;" width="15" height="13" viewBox="0 0 15 13"><path d="M1.5 1.5 H10 L13.2 6.5 H4.5 Z" fill="none" stroke="#1447E6" stroke-width="1.2" stroke-linejoin="round"/><path d="M7.5 7 V10.5" stroke="#555" stroke-width="1"/><rect x="4" y="10.5" width="7" height="1.8" fill="#555"/></svg>
<div class="t" style="left:1053px;top:749px;font-size:11px;color:#000;letter-spacing:-0.044px;">Tracker #4664</div>
<div style="left:1023px;top:771px;width:8px;height:1px;background:repeating-linear-gradient(to right,#A0A0A0 0 1px,transparent 1px 2px);"></div>
<svg style="left:1032px;top:766px;" width="15" height="13" viewBox="0 0 15 13"><path d="M1.5 1.5 H10 L13.2 6.5 H4.5 Z" fill="none" stroke="#1447E6" stroke-width="1.2" stroke-linejoin="round"/><path d="M7.5 7 V10.5" stroke="#555" stroke-width="1"/><rect x="4" y="10.5" width="7" height="1.8" fill="#555"/></svg>
<div class="t" style="left:1053px;top:767px;font-size:11px;color:#000;letter-spacing:-0.044px;">Tracker #4662</div>
<div style="left:1022px;top:791px;width:109px;height:36px;background:#D5D5D5;border:1px solid #8E8E8E;border-radius:3px;box-shadow:inset -1px -1px 0 #ABABAB;"></div>
<svg style="left:1049px;top:799px;" width="20" height="20" viewBox="0 0 20 20"><path d="M2.6 2.6 L17.4 17.4 M17.4 2.6 L2.6 17.4" stroke="#E00000" stroke-width="4.6"/></svg>
<div class="t" style="left:1074px;top:805px;font-size:11.5px;color:#000;letter-spacing:-0.762px;">Cancel</div>
<div style="left:1137px;top:791px;width:134px;height:36px;background:#D5D5D5;border:1px solid #8E8E8E;border-radius:3px;box-shadow:inset -1px -1px 0 #ABABAB;"></div>
<svg style="left:1161px;top:798px;" width="26" height="22" viewBox="0 0 26 22"><path d="M2.5 12 L8.5 18 L23.5 3" stroke="#74B04C" stroke-width="4.2" fill="none"/></svg>
<div class="t" style="left:1190px;top:805px;font-size:11.5px;color:#000;letter-spacing:-0.630px;">Close scene</div>
<div style="left:970px;top:430px;width:14px;height:40px;background:#E1E1E1;"></div>
<svg style="left:972px;top:447px;" width="8" height="9" viewBox="0 0 8 9"><path d="M2.5 2 L5.8 4.5 L2.5 7" stroke="#333" stroke-width="0.9" fill="none"/></svg>
<div style="left:6px;top:831px;width:1268px;height:19px;background:#E1E1E1;"></div>
<div style="left:224px;top:833px;width:1px;height:15px;background:#BDBDBD;"></div>
<div style="left:497px;top:833px;width:1px;height:15px;background:#BDBDBD;"></div>
<div style="left:519px;top:833px;width:1px;height:15px;background:#BDBDBD;"></div>
<div style="left:722px;top:833px;width:1px;height:15px;background:#BDBDBD;"></div>
<div style="left:983px;top:833px;width:1px;height:15px;background:#BDBDBD;"></div>
<div class="t" style="left:8px;top:836px;font-size:12px;color:#000;letter-spacing:-0.001px;">Grid cell size: 200.0 m</div>
<div class="t" style="left:228px;top:836px;font-size:12px;color:#000;letter-spacing:-0.003px;">Geographical - Perspective view</div>
<svg style="left:501px;top:832px;" width="17" height="17" viewBox="0 0 17 17"><path d="M8.5 3.5 V13.5 M3.5 8.5 H13.5" stroke="#4A6BFF" stroke-width="1.8"/><path d="M8.5 1 L11.5 4.5 H5.5Z M8.5 16 L11.5 12.5 H5.5Z M1 8.5 L4.5 5.5 V11.5Z M16 8.5 L12.5 5.5 V11.5Z" fill="#4A6BFF"/></svg>
<div class="t" style="left:523px;top:836px;font-size:12px;color:#000;letter-spacing:0.408px;">X: 7926.74, Y: -4772.70 m</div>
<div class="t" style="left:726px;top:836px;font-size:12px;color:#000;letter-spacing:0.317px;">Active area : 1465582.25 m²</div>
<div class="t" style="left:987px;top:836px;font-size:12px;color:#000;letter-spacing:0.286px;">Total number of modules: 460265</div>
<div style="left:1261px;top:846px;width:2px;height:2px;background:#B5B5B5;"></div>
<div style="left:1264px;top:846px;width:2px;height:2px;background:#B5B5B5;"></div>
<div style="left:1267px;top:846px;width:2px;height:2px;background:#B5B5B5;"></div>
<div style="left:1264px;top:843px;width:2px;height:2px;background:#B5B5B5;"></div>
<div style="left:1267px;top:843px;width:2px;height:2px;background:#B5B5B5;"></div>
<div style="left:1267px;top:840px;width:2px;height:2px;background:#B5B5B5;"></div>
<svg style="left:0px;top:0px" width="1280" height="856" viewBox="0 0 1280 856"><defs><clipPath id="vc"><rect x="7" y="105" width="977" height="726"/></clipPath></defs><path clip-path="url(#vc)" d="M475.75 765.50 L361.54 831.00 M475.75 765.50 L589.96 831.00 M509.75 785.00 L429.54 831.00 M441.75 785.00 L521.96 831.00 M543.75 804.50 L497.54 831.00 M407.75 804.50 L453.96 831.00 M577.75 824.00 L565.54 831.00 M373.75 824.00 L385.96 831.00" stroke="#CDCDCD" stroke-width="1" fill="none" shape-rendering="crispEdges"/></svg>
<div style="left:577px;top:105px;width:2px;height:726px;background:repeating-linear-gradient(to bottom,#0000F0 0 1px,transparent 1px 3px,#0000F0 3px 4px);"></div>
<div class="t" style="left:589px;top:815px;font-size:14px;color:#858585;letter-spacing:1.316px;">Zenith</div>
<div style="left:6px;top:52px;width:230px;height:262px;background:#FFFFFF;border:1px solid #8F8F8F;box-shadow:2px 2px 1.5px rgba(0,0,0,0.42);"></div>
<div style="left:8px;top:140px;width:226px;height:22px;background:#91C1E8;"></div>
<div style="left:17px;top:231px;width:208px;height:1px;background:#A0A0A0;"></div>
<div style="left:17px;top:260px;width:208px;height:1px;background:#A0A0A0;"></div>
<div class="t" style="left:38px;top:58px;font-size:12px;color:#000;letter-spacing:-0.297px;"><u>N</u>ew scene</div>
<div class="t" style="left:184px;top:58px;font-size:12px;color:#000;letter-spacing:0.271px;">Ctrl+N</div>
<div class="t" style="left:38px;top:79px;font-size:12px;color:#000;letter-spacing:-0.561px;"><u>R</u>ead scene</div>
<div class="t" style="left:184px;top:79px;font-size:12px;color:#000;letter-spacing:0.137px;">Ctrl+O</div>
<div class="t" style="left:38px;top:101px;font-size:12px;color:#000;letter-spacing:-0.074px;">R<u>e</u>ad building</div>
<div class="t" style="left:38px;top:123px;font-size:12px;color:#000;letter-spacing:-0.277px;">Re<u>a</u>d objects</div>
<div class="t" style="left:38px;top:145px;font-size:12px;color:#000;letter-spacing:0.317px;"><u>I</u>mport</div>
<div class="t" style="left:38px;top:167px;font-size:12px;color:#000;letter-spacing:-0.425px;">E<u>x</u>port scene (.SHD)</div>
<div class="t" style="left:187.5px;top:167px;font-size:12px;color:#000;letter-spacing:-0.297px;">Ctrl+S</div>
<div class="t" style="left:38px;top:189px;font-size:12px;color:#8C8C8C;letter-spacing:-0.267px;">E<u>x</u>port selected objects (.SHO)</div>
<div class="t" style="left:38px;top:211px;font-size:12px;color:#000;letter-spacing:-0.453px;"><u>S</u>ave scene view</div>
<div class="t" style="left:38px;top:240px;font-size:12px;color:#000;letter-spacing:0.003px;">Prin<u>t</u></div>
<div class="t" style="left:186.4px;top:240px;font-size:12px;color:#000;letter-spacing:-0.078px;">Ctrl+P</div>
<div class="t" style="left:38px;top:269px;font-size:12px;color:#000;letter-spacing:-0.472px;"><u>C</u>ancel</div>
<div class="t" style="left:184px;top:269px;font-size:12px;color:#000;letter-spacing:0.137px;">Ctrl+Q</div>
<div class="t" style="left:38px;top:291px;font-size:12px;color:#000;letter-spacing:-0.435px;">C<u>l</u>ose scene</div>
<div class="t" style="left:182.4px;top:291px;font-size:12px;color:#000;letter-spacing:0.060px;">Ctrl+W</div>
<svg style="left:221px;top:147px;" width="7" height="9" viewBox="0 0 7 9"><path d="M1.5 0.8 L5.3 4.5 L1.5 8.2" stroke="#111" stroke-width="1.3" fill="none"/></svg>
<svg style="left:221px;top:213px;" width="7" height="9" viewBox="0 0 7 9"><path d="M1.5 0.8 L5.3 4.5 L1.5 8.2" stroke="#111" stroke-width="1.3" fill="none"/></svg>
<svg style="left:11px;top:55px;" width="18" height="18" viewBox="0 0 18 18"><path d="M2.5 1.5 H11.5 L15.5 5.5 V16.5 H2.5Z" fill="#F4F4F4" stroke="#C8C8C8" stroke-width="1"/><path d="M11.5 1.5 V5.5 H15.5" fill="#DADADA"/><path d="M0.8 5.2 H10 M5.4 0.6 V9.8" stroke="#00B000" stroke-width="3"/></svg>
<svg style="left:11px;top:77px;" width="18" height="15" viewBox="0 0 18 15"><path d="M1 3.5 Q1 2.2 2.3 2.2 H6 L7.5 3.7 H12.5 Q13.5 3.7 13.5 4.8 V6 H4.2 L1 13.5Z" fill="#D9BF2E"/><path d="M1 13.5 L4.2 6 H17 L13.8 13.5Z" fill="#E8DC86" stroke="#D2BC36" stroke-width="0.8"/></svg>
<svg style="left:11px;top:99px;" width="18" height="15" viewBox="0 0 18 15"><path d="M1 3.5 Q1 2.2 2.3 2.2 H6 L7.5 3.7 H12.5 Q13.5 3.7 13.5 4.8 V6 H4.2 L1 13.5Z" fill="#D9BF2E"/><path d="M1 13.5 L4.2 6 H17 L13.8 13.5Z" fill="#E8DC86" stroke="#D2BC36" stroke-width="0.8"/></svg>
<svg style="left:11px;top:121px;" width="18" height="15" viewBox="0 0 18 15"><path d="M1 3.5 Q1 2.2 2.3 2.2 H6 L7.5 3.7 H12.5 Q13.5 3.7 13.5 4.8 V6 H4.2 L1 13.5Z" fill="#D9BF2E"/><path d="M1 13.5 L4.2 6 H17 L13.8 13.5Z" fill="#E8DC86" stroke="#D2BC36" stroke-width="0.8"/></svg>
<svg style="left:11px;top:142px;" width="18" height="18" viewBox="0 0 18 18"><path d="M2.5 1.5 H11.5 L15.5 5.5 V16.5 H2.5Z" fill="#F4F4F4" stroke="#C8C8C8" stroke-width="1"/><path d="M11.5 1.5 V5.5 H15.5" fill="#DADADA"/><path d="M0.6 8.7 H5.5" stroke="#00B000" stroke-width="2.8"/><path d="M4.8 3.8 L10 8.7 L4.8 13.6Z" fill="#00B000"/></svg>
<svg style="left:11px;top:164px;" width="18" height="18" viewBox="0 0 18 18"><path d="M1 1.5 H13.5 L16 4 V16.5 H1Z" fill="#3E63E8"/><rect x="4" y="1.5" width="8" height="5.5" fill="#E8E8E8"/><rect x="9.5" y="2.3" width="1.6" height="3.8" fill="#3E63E8"/><rect x="3.2" y="10" width="10.6" height="6.5" fill="#E4E4E4"/><path d="M4.6 12 H12.4 M4.6 14 H12.4" stroke="#9A9A9A" stroke-width="0.8"/></svg>
<svg style="left:11px;top:186px;" width="18" height="18" viewBox="0 0 18 18"><path d="M1 1.5 H13.5 L16 4 V16.5 H1Z" fill="#B4B4B4"/><rect x="4" y="1.5" width="8" height="5.5" fill="#E8E8E8"/><rect x="9.5" y="2.3" width="1.6" height="3.8" fill="#B4B4B4"/><rect x="3.2" y="10" width="10.6" height="6.5" fill="#E4E4E4"/><path d="M4.6 12 H12.4 M4.6 14 H12.4" stroke="#A0A0A0" stroke-width="0.8"/></svg>
<svg style="left:11px;top:208px;" width="18" height="18" viewBox="0 0 18 18"><rect x="1" y="3" width="16" height="12" fill="#EDEDED"/><rect x="2" y="4" width="14" height="10" fill="#EE8A2E"/><circle cx="5.5" cy="7" r="1.5" fill="#FFD54A"/><path d="M2 14 V11.5 L6 9 L9 10.5 L12 8.5 L16 11 V14Z" fill="#8A4A28"/></svg>
<svg style="left:11px;top:237px;" width="18" height="18" viewBox="0 0 18 18"><rect x="4.5" y="1.5" width="9" height="5" fill="#EDEDED" stroke="#D0D0D0" stroke-width="0.8"/><path d="M1.5 6.5 H16.5 V13 H1.5Z" fill="#7A7F90" /><rect x="1.5" y="6.5" width="15" height="3.5" fill="#9DA2B0"/><rect x="4.5" y="11" width="9" height="5.5" fill="#F0F0F0" stroke="#C8C8C8" stroke-width="0.8"/><path d="M6 13.5 H12" stroke="#C8C8C8" stroke-width="0.8"/></svg>
<svg style="left:12px;top:267px;" width="16" height="16" viewBox="0 0 16 16"><path d="M2.5 2.5 L13.5 13.5 M13.5 2.5 L2.5 13.5" stroke="#E30000" stroke-width="3"/></svg>
<svg style="left:11px;top:288px;" width="18" height="16" viewBox="0 0 18 16"><path d="M1.5 9.5 L6 14 L16.5 3" stroke="#72B04A" stroke-width="3" fill="none"/></svg>
<div style="left:230px;top:140px;width:362px;height:116px;background:#FFFFFF;border:1px solid #8F8F8F;box-shadow:2px 2px 1.5px rgba(0,0,0,0.42);"></div>
<div style="left:232px;top:142px;width:358px;height:20px;background:#91C1E8;"></div>
<div class="t" style="left:262px;top:146px;font-size:12px;color:#000;letter-spacing:-0.450px;"><u>I</u>mport a 3D scene (3DS, DAE, PVC)</div>
<div class="t" style="left:262px;top:167px;font-size:12px;color:#000;letter-spacing:-0.107px;">I<u>m</u>port a Helios3D file (H2P)</div>
<div class="t" style="left:262px;top:189px;font-size:12px;color:#000;letter-spacing:-0.134px;">Im<u>p</u>ort ground data (CSV, TIF)</div>
<div class="t" style="left:262px;top:211px;font-size:12px;color:#000;letter-spacing:0.113px;">Imp<u>o</u>rt a ground image</div>
<div class="t" style="left:262px;top:233px;font-size:12px;color:#000;letter-spacing:0.030px;"><u>D</u>ownload a satellite ground image and/or ground data</div>
<svg style="left:236px;top:144px;" width="16" height="17" viewBox="0 0 16 17"><path d="M1.5 1.5 H10 L13.5 5 V15.5 H1.5Z" fill="#F4F4F4" stroke="#CFCFCF" stroke-width="1"/><path d="M10 1.5 V5 H13.5" fill="#DCDCDC"/><rect x="3.5" y="7" width="7.5" height="6" fill="none" stroke="#9A9A9A" stroke-width="1"/><rect x="5.5" y="5.5" width="4" height="6" fill="none" stroke="#9A9A9A" stroke-width="1"/></svg>
<svg style="left:236px;top:165px;" width="16" height="17" viewBox="0 0 16 17"><path d="M1.5 1.5 H10 L13.5 5 V15.5 H1.5Z" fill="#F4F4F4" stroke="#CFCFCF" stroke-width="1"/><path d="M10 1.5 V5 H13.5" fill="#DCDCDC"/><text x="2.2" y="11.2" font-family="Liberation Sans" font-weight="bold" font-size="6.2" fill="#505050" textLength="10.5" lengthAdjust="spacingAndGlyphs">H2P</text></svg>
<svg style="left:236px;top:187px;" width="16" height="17" viewBox="0 0 16 17"><path d="M1.5 1.5 H10 L13.5 5 V15.5 H1.5Z" fill="#F4F4F4" stroke="#CFCFCF" stroke-width="1"/><path d="M10 1.5 V5 H13.5" fill="#DCDCDC"/><text x="2.2" y="11.2" font-family="Liberation Sans" font-weight="bold" font-size="6.2" fill="#505050" textLength="10.5" lengthAdjust="spacingAndGlyphs">CSV</text></svg>
<svg style="left:236px;top:209px;" width="16" height="17" viewBox="0 0 16 17"><rect x="1.5" y="1.5" width="13" height="14" fill="#EDEDED" stroke="#D6D6D6" stroke-width="1"/><rect x="3" y="3" width="10" height="11" fill="#EE8A2E"/><circle cx="6" cy="6" r="1.3" fill="#FFD54A"/><path d="M3 14 V10 L6.5 8 L9 9.5 L13 8 V14Z" fill="#8A4A28"/></svg>
<svg style="left:236px;top:231px;" width="16" height="17" viewBox="0 0 16 17"><rect x="1.5" y="1.5" width="13" height="14" fill="#EDEDED" stroke="#D6D6D6" stroke-width="1"/><rect x="3" y="3" width="10" height="11" fill="#EE8A2E"/><circle cx="6" cy="6" r="1.3" fill="#FFD54A"/><path d="M3 14 V10 L6.5 8 L9 9.5 L13 8 V14Z" fill="#8A4A28"/></svg>
</body></html>
